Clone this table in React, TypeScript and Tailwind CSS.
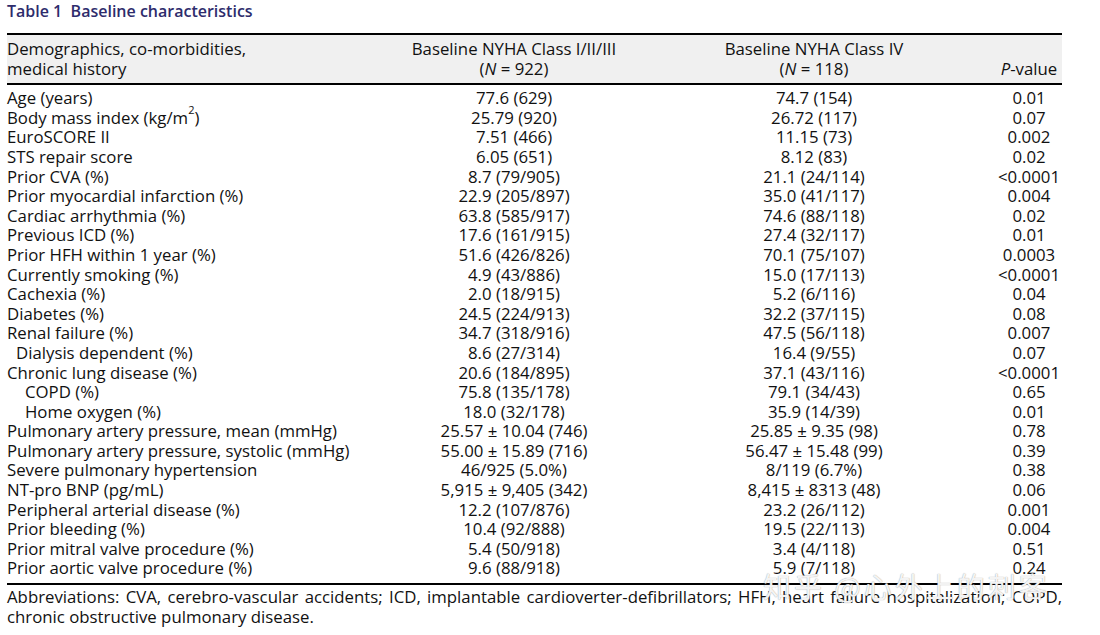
import React from 'react'

type Row = { label: React.ReactNode; indent?: number; a: string; b: string; p: string }

const rows: Row[] = [
  { label: 'Age (years)', a: '77.6 (629)', b: '74.7 (154)', p: '0.01' },
  { label: <>Body mass index (kg/m<sup className="text-[11px] align-[4px] leading-none">2</sup>)</>, a: '25.79 (920)', b: '26.72 (117)', p: '0.07' },
  { label: 'EuroSCORE II', a: '7.51 (466)', b: '11.15 (73)', p: '0.002' },
  { label: 'STS repair score', a: '6.05 (651)', b: '8.12 (83)', p: '0.02' },
  { label: 'Prior CVA (%)', a: '8.7 (79/905)', b: '21.1 (24/114)', p: '<0.0001' },
  { label: 'Prior myocardial infarction (%)', a: '22.9 (205/897)', b: '35.0 (41/117)', p: '0.004' },
  { label: 'Cardiac arrhythmia (%)', a: '63.8 (585/917)', b: '74.6 (88/118)', p: '0.02' },
  { label: 'Previous ICD (%)', a: '17.6 (161/915)', b: '27.4 (32/117)', p: '0.01' },
  { label: 'Prior HFH within 1 year (%)', a: '51.6 (426/826)', b: '70.1 (75/107)', p: '0.0003' },
  { label: 'Currently smoking (%)', a: '4.9 (43/886)', b: '15.0 (17/113)', p: '<0.0001' },
  { label: 'Cachexia (%)', a: '2.0 (18/915)', b: '5.2 (6/116)', p: '0.04' },
  { label: 'Diabetes (%)', a: '24.5 (224/913)', b: '32.2 (37/115)', p: '0.08' },
  { label: 'Renal failure (%)', a: '34.7 (318/916)', b: '47.5 (56/118)', p: '0.007' },
  { label: 'Dialysis dependent (%)', indent: 1, a: '8.6 (27/314)', b: '16.4 (9/55)', p: '0.07' },
  { label: 'Chronic lung disease (%)', a: '20.6 (184/895)', b: '37.1 (43/116)', p: '<0.0001' },
  { label: 'COPD (%)', indent: 2, a: '75.8 (135/178)', b: '79.1 (34/43)', p: '0.65' },
  { label: 'Home oxygen (%)', indent: 2, a: '18.0 (32/178)', b: '35.9 (14/39)', p: '0.01' },
  { label: 'Pulmonary artery pressure, mean (mmHg)', a: '25.57 ± 10.04 (746)', b: '25.85 ± 9.35 (98)', p: '0.78' },
  { label: 'Pulmonary artery pressure, systolic (mmHg)', a: '55.00 ± 15.89 (716)', b: '56.47 ± 15.48 (99)', p: '0.39' },
  { label: 'Severe pulmonary hypertension', a: '46/925 (5.0%)', b: '8/119 (6.7%)', p: '0.38' },
  { label: 'NT-pro BNP (pg/mL)', a: '5,915 ± 9,405 (342)', b: '8,415 ± 8313 (48)', p: '0.06' },
  { label: 'Peripheral arterial disease (%)', a: '12.2 (107/876)', b: '23.2 (26/112)', p: '0.001' },
  { label: 'Prior bleeding (%)', a: '10.4 (92/888)', b: '19.5 (22/113)', p: '0.004' },
  { label: 'Prior mitral valve procedure (%)', a: '5.4 (50/918)', b: '3.4 (4/118)', p: '0.51' },
  { label: 'Prior aortic valve procedure (%)', a: '9.6 (88/918)', b: '5.9 (7/118)', p: '0.24' },
]

const grid = 'grid grid-cols-[373px_268px_332px_82px]'

export default function App() {
  return (
    <div className="relative w-[1100px] h-[635px] bg-white text-[#111] px-[7px] font-['Open_Sans',sans-serif] overflow-hidden">
      <div className="h-[33px] pt-[1px] text-[16px] font-semibold text-[#2e2c6c] leading-[21px]">
        Table 1&nbsp;&nbsp;Baseline characteristics
      </div>
      <div className="w-[1055px] text-[16.8px] leading-[19.6px]">
        <div className={`${grid} bg-[#f0f0f0] border-t-2 border-b-2 border-black pt-[4px] pb-[5px]`}>
          <div>Demographics, co-morbidities,<br />medical history</div>
          <div className="text-center">Baseline NYHA Class I/II/III<br />(<i>N</i> = 922)</div>
          <div className="text-center">Baseline NYHA Class IV<br />(<i>N</i> = 118)</div>
          <div className="flex items-end justify-center pl-4"><span><i>P</i>-value</span></div>
        </div>
        <div className="pt-[3px] pb-[5px] border-b-2 border-black">
          {rows.map((r, i) => (
            <div key={i} className={grid}>
              <div className={r.indent === 1 ? 'pl-[9px]' : r.indent === 2 ? 'pl-[18px]' : ''}>{r.label}</div>
              <div className="text-center">{r.a}</div>
              <div className="text-center">{r.b}</div>
              <div className="text-center pl-4">{r.p}</div>
            </div>
          ))}
        </div>
        <p className="pt-[2px] text-justify">
          Abbreviations: CVA, cerebro-vascular accidents; ICD, implantable cardioverter-defibrillators; HFH, heart failure hospitalization; COPD, chronic obstructive pulmonary disease.
        </p>
      </div>
      <div className="absolute left-[763px] top-[568px] text-[28px] leading-[36px] text-white/90 font-['Noto_Sans_CJK_SC',sans-serif] [text-shadow:0_0_1px_#888] tracking-[3px]">
        知乎 @心外上的刺客
      </div>
    </div>
  )
}
